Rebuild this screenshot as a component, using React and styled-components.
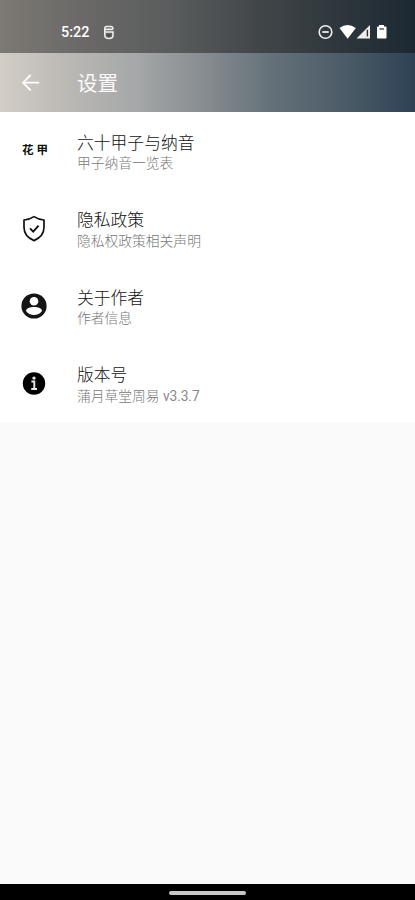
import React from "react";
import styled, { createGlobalStyle } from "styled-components";

const Global = createGlobalStyle`
  * { box-sizing: border-box; }
  html, body { margin: 0; padding: 0; }
  body { background: #fafafa; overflow: hidden; }
`;

const Screen = styled.div`
  width: 415px;
  height: 900px;
  display: flex;
  flex-direction: column;
  background: #fafafa;
  font-family: Roboto, "Noto Sans CJK SC", sans-serif;
`;

const StatusBar = styled.header`
  height: 53px;
  flex: none;
  display: flex;
  align-items: center;
  padding: 12px 28px 0 61px;
  color: #fff;
  background: linear-gradient(90deg, #7d7974 0%, #6a6967 20%, #585b5c 43%, #414649 62%, #2c353b 84%, #1c2831 100%);
`;

const Clock = styled.span`
  font-size: 14.4px;
  font-weight: 500;
  line-height: 18px;
  width: 42px;
`;

const StatusIcons = styled.div`
  display: flex;
  align-items: center;
  margin-left: auto;
  padding-bottom: 1px;
`;

const AppBar = styled.nav`
  height: 59px;
  flex: none;
  display: flex;
  align-items: center;
  padding-left: 20px;
  color: #fff;
  background: linear-gradient(90deg, #d2cdc6 0%, #bdbab6 15%, #a5a7a8 33%, #858b8f 50%, #637078 66%, #4a5a66 84%, #2e4256 100%);
`;

const Title = styled.h1`
  margin: 2px 0 0 36px;
  font-size: 20.5px;
  line-height: 28px;
  font-weight: 400;
  color: #fafafa;
`;

const List = styled.main`
  height: 310px;
  flex: none;
  display: grid;
  grid-template-rows: repeat(4, 77.6px);
  background: #fff;
`;

const Row = styled.section`
  display: grid;
  grid-template-columns: 77px 1fr;
`;

const IconCell = styled.div`
  height: 77px;
  padding-left: 20px;
  display: flex;
  align-items: center;

  svg { display: block; }
`;

const Labels = styled.div`
  display: flex;
  flex-direction: column;
  padding-top: 19.5px;
`;

const Name = styled.span`
  font-size: 16.8px;
  line-height: 22.5px;
  font-weight: 300;
  color: #111;
`;

const Summary = styled.span`
  font-size: 13.8px;
  line-height: 19px;
  font-weight: 300;
  letter-spacing: -0.03px;
  color: #777;
`;

const Version = styled.span`
  font-weight: 400;
  letter-spacing: -0.1px;
  color: #888;
`;

const Glyphs = styled.span`
  display: flex;
  gap: 3px;
  margin: 0 0 2px 2px;
  font-size: 11.5px;
  line-height: 14px;
  font-weight: 700;
  color: #111;
`;

const NavBar = styled.footer`
  height: 16px;
  flex: none;
  margin-top: auto;
  display: flex;
  justify-content: center;
  padding-top: 7px;
  background: #000;
`;

const Handle = styled.div`
  width: 77px;
  height: 4px;
  border-radius: 2px;
  background: #c8c8c8;
`;

const NoticeIcon = () => (
  <svg width="12" height="16" viewBox="0 0 12 16" fill="none" stroke="#eee" strokeWidth="1.6">
    <path d="M9.8 4.4V3.3Q9.8 1.5 8 1.5H3.6Q1.8 1.5 1.8 3.3V7H10V10.2Q10 13.5 6 13.5Q1.8 13.5 1.8 10.2V7M1.8 4.4H9.8" />
    <path d="M4 9.5H8Q8 11.5 6 11.5T4 9.5Z" fill="#444" stroke="none" />
  </svg>
);

const SystemIcons = () => (
  <svg width="70" height="18" viewBox="0 0 70 18">
    <circle cx="8.5" cy="9" r="6.3" fill="none" stroke="#eee" strokeWidth="1.6" />
    <path d="M5.3 9H11.7" stroke="#eee" strokeWidth="1.8" />
    <path d="M22.5 5Q30.5 -1 38.8 5L30.7 15.7Z" fill="#fff" />
    <path d="M39.5 15.5L53 2V15.5Z" fill="#eee" />
    <path d="M50.4 6.8V13.5" stroke="#26313a" strokeWidth="1.4" />
    <path d="M62 2H67V3.5H68.7Q69.5 3.5 69.5 4.3V14.7Q69.5 15.5 68.7 15.5H60.8Q60 15.5 60 14.7V4.3Q60 3.5 60.8 3.5H62Z" fill="#fff" />
    <path d="M62.5 6H67" stroke="#26313a" strokeWidth="1.2" />
  </svg>
);

const BackIcon = () => (
  <svg width="21" height="20" viewBox="0 0 21 20" fill="none" stroke="#fff" strokeWidth="1.8">
    <path d="M19.2 9.7H3M10.7 2L3 9.7L10.7 17.4" />
  </svg>
);

const ShieldIcon = () => (
  <svg width="28" height="28" viewBox="0 0 28 28" fill="none" stroke="#111" strokeWidth="1.7">
    <path d="M14 2.6Q18.5 5.6 24 6V13.3Q24 22.4 14 26.6Q4 22.4 4 13.3V6Q9.5 5.6 14 2.6Z" strokeLinejoin="round" />
    <path d="M10 14.4L13.2 17.6L18.6 11.6" strokeWidth="1.9" />
  </svg>
);

const PersonIcon = () => (
  <svg width="28" height="28" viewBox="0 0 28 28">
    <circle cx="14" cy="14" r="12.6" fill="#151515" />
    <circle cx="14" cy="9.3" r="4.3" fill="#fff" />
    <path d="M6 19C6 13.7 22 13.7 22 19C18.6 24.4 9.4 24.4 6 19Z" fill="#fff" />
  </svg>
);

const InfoIcon = () => (
  <svg width="28" height="28" viewBox="0 0 28 28">
    <circle cx="14" cy="14.5" r="11.2" fill="#000" />
    <circle cx="14" cy="9.1" r="1.7" fill="#e8e8e8" />
    <path d="M11.4 12.5H14.3V19.5M11.2 20H17" fill="none" stroke="#e8e8e8" strokeWidth="1.9" />
  </svg>
);

const items = [
  { name: "六十甲子与纳音", summary: "甲子纳音一览表", icon: <Glyphs><span>花</span><span>甲</span></Glyphs> },
  { name: "隐私政策", summary: "隐私权政策相关声明", icon: <ShieldIcon /> },
  { name: "关于作者", summary: "作者信息", icon: <PersonIcon /> },
  { name: "版本号", summary: "蒲月草堂周易 ", version: "v3.3.7", icon: <InfoIcon /> },
];

export default function App() {
  return (
    <Screen>
      <Global />
      <StatusBar>
        <Clock>5:22</Clock>
        <NoticeIcon />
        <StatusIcons><SystemIcons /></StatusIcons>
      </StatusBar>
      <AppBar>
        <BackIcon />
        <Title>设置</Title>
      </AppBar>
      <List>
        {items.map((item) => (
          <Row key={item.name}>
            <IconCell>{item.icon}</IconCell>
            <Labels>
              <Name>{item.name}</Name>
              <Summary>
                {item.summary}
                {item.version && <Version>{item.version}</Version>}
              </Summary>
            </Labels>
          </Row>
        ))}
      </List>
      <NavBar><Handle /></NavBar>
    </Screen>
  );
}
